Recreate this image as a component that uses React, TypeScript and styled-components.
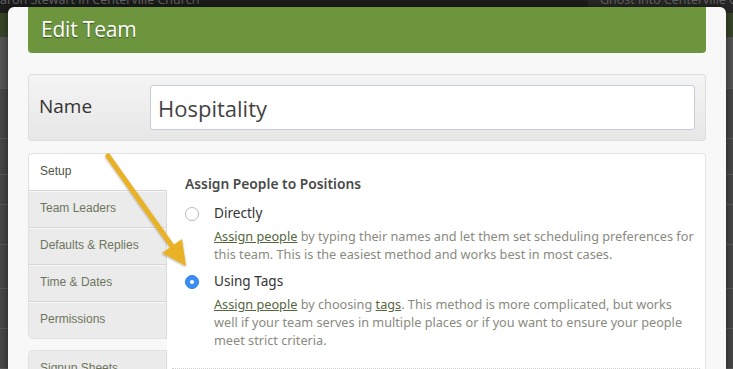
import React from "react";
import styled, { createGlobalStyle } from "styled-components";

const GlobalStyle = createGlobalStyle`
  html, body {
    margin: 0;
    padding: 0;
    width: 733px;
    height: 369px;
    overflow: hidden;
    background: #474747;
  }
  * { box-sizing: border-box; }
`;

const tabs = ["Setup", "Team Leaders", "Defaults & Replies", "Time & Dates", "Permissions"];

export default function App() {
  return (
    <Page>
      <GlobalStyle />
      <Backdrop>
        <TopBar>
          <TopTitle>aron Stewart in Centerville Church</TopTitle>
          <TopRight>
            <TopTitle>Ghost into Centerville Church</TopTitle>
          </TopRight>
        </TopBar>
        <OliveBand />
        <BackRows>
          {[52, 50, 36, 30, 40, 44, 40, 40].map((h, i) => (
            <BackRow key={i} $height={h} $light={i === 0} />
          ))}
        </BackRows>
      </Backdrop>

      <Modal>
        <Header>
          <HeaderTitle>Edit Team</HeaderTitle>
        </Header>

        <NamePanel>
          <NameLabel>Name</NameLabel>
          <NameInput value="Hospitality" readOnly />
        </NamePanel>

        <Body>
          <SideNav>
            <TabGroup>
              {tabs.map((t, i) => (
                <Tab key={t} $active={i === 0}>
                  {t}
                </Tab>
              ))}
            </TabGroup>
            <TabGroup>
              <Tab>Signup Sheets</Tab>
            </TabGroup>
          </SideNav>

          <Content>
            <SectionTitle>Assign People to Positions</SectionTitle>

            <Option>
              <Radio />
              <OptionText>
                <OptionLabel>Directly</OptionLabel>
                <OptionDesc>
                  <DescLink>Assign people</DescLink> by typing their names and let them set scheduling
                  preferences for this team. This is the easiest method and works best in most cases.
                </OptionDesc>
              </OptionText>
            </Option>

            <Option>
              <Radio $checked />
              <OptionText>
                <OptionLabel>Using Tags</OptionLabel>
                <OptionDesc>
                  <DescLink>Assign people</DescLink> by choosing <DescLink>tags</DescLink>. This method is
                  more complicated, but works well if your team serves in multiple places or if you want
                  to ensure your people meet strict criteria.
                </OptionDesc>
              </OptionText>
            </Option>

            <Divider />
          </Content>
        </Body>
      </Modal>

      <ArrowLayer width="733" height="369" viewBox="0 0 733 369">
        <defs>
          <filter id="arrowShadow" x="-20%" y="-20%" width="140%" height="140%">
            <feDropShadow dx="0" dy="1" stdDeviation="1.2" floodColor="#000" floodOpacity="0.35" />
          </filter>
        </defs>
        <g filter="url(#arrowShadow)">
          <line x1="108" y1="156" x2="174" y2="249" stroke="#e9b128" strokeWidth="5" strokeLinecap="round" />
          <polygon points="186,266 162,253 182,239" fill="#e9b128" />
        </g>
      </ArrowLayer>
    </Page>
  );
}

const Page = styled.div`
  position: relative;
  width: 733px;
  height: 369px;
  overflow: hidden;
`;

const Backdrop = styled.div`
  display: flex;
  flex-direction: column;
  width: 100%;
  height: 100%;
`;

const TopBar = styled.div`
  display: flex;
  height: 28px;
  background: #1d1d1d;
  overflow: hidden;
`;

const TopTitle = styled.div`
  margin-top: -9px;
  font-family: "Open Sans", "Liberation Sans", sans-serif;
  font-size: 12.5px;
  line-height: 18px;
  color: #666;
  white-space: nowrap;
`;

const TopRight = styled.div`
  margin-left: auto;
  width: 145px;
  padding-left: 12px;
  background: #282828;
`;

const OliveBand = styled.div`
  height: 52px;
  background: #394628;
`;

const BackRows = styled.div`
  display: flex;
  flex-direction: column;
`;

const BackRow = styled.div<{ $height: number; $light?: boolean }>`
  height: ${(p) => p.$height}px;
  background: ${(p) => (p.$light ? "#555" : "#474747")};
  border-bottom: 1px solid #5a5a5a;
`;

const Modal = styled.div`
  position: absolute;
  top: 7px;
  left: 8px;
  width: 718px;
  height: 400px;
  padding: 0 20px;
  background: #f8f8f8;
  border-radius: 6px 6px 0 0;
  box-shadow: 0 0 8px rgba(0, 0, 0, 0.5);
  display: flex;
  flex-direction: column;
`;

const Header = styled.div`
  height: 46px;
  display: flex;
  align-items: center;
  padding-left: 13px;
  background: #6c953e;
  border-radius: 0 0 4px 4px;
`;

const HeaderTitle = styled.h1`
  margin: 0 0 2px;
  font-family: "Open Sans", "Noto Sans", sans-serif;
  font-weight: 400;
  font-size: 21px;
  letter-spacing: -0.2px;
  color: #fff;
  text-shadow: 0 1px 1px rgba(0, 0, 0, 0.45);
`;

const NamePanel = styled.div`
  margin-top: 21px;
  height: 67px;
  display: flex;
  align-items: center;
  padding: 0 10px 0 10px;
  background: linear-gradient(#f4f4f4, #e7e7e7);
  border: 1px solid #dedede;
  border-radius: 3px;
`;

const NameLabel = styled.label`
  width: 111px;
  margin-bottom: 3px;
  font-family: "Open Sans", "Noto Sans", sans-serif;
  font-size: 19px;
  color: #333;
`;

const NameInput = styled.input`
  flex: 1;
  height: 45px;
  padding: 0 7px;
  font-family: "Open Sans", "Noto Sans", sans-serif;
  font-size: 22px;
  color: #444;
  background: #fff;
  border: 1px solid #c6cdd8;
  border-radius: 3px;
  outline: none;
`;

const Body = styled.div`
  margin-top: 12px;
  display: flex;
  flex: 1;
`;

const SideNav = styled.div`
  width: 139px;
  display: flex;
  flex-direction: column;
  gap: 11px;
`;

const TabGroup = styled.div`
  display: flex;
  flex-direction: column;
  background: #ebebeb;
  border: 1px solid #e1e1e1;
  border-right: none;
  border-radius: 5px 0 0 5px;
  overflow: hidden;
`;

const Tab = styled.div<{ $active?: boolean }>`
  height: 37px;
  flex: none;
  display: flex;
  align-items: center;
  padding: 0 0 3px 11px;
  font-family: "Liberation Sans", Arial, sans-serif;
  font-size: 12px;
  color: ${(p) => (p.$active ? "#4e5545" : "#6d765d")};
  background: ${(p) => (p.$active ? "#fff" : "#ebebeb")};
  border-right: 1px solid ${(p) => (p.$active ? "#fff" : "#dcdcdc")};
  &:first-child {
    height: 36px;
  }
  & + & {
    border-top: 1px solid #d6d6d6;
    box-shadow: inset 0 1px 0 #f7f7f7;
  }
`;

const Content = styled.div`
  flex: 1;
  padding: 20px 0 0 18px;
  background: #fff;
  border: 1px solid #e4e4e4;
  border-left: none;
  border-radius: 0 4px 0 0;
`;

const SectionTitle = styled.h2`
  margin: 0 0 11px;
  font-family: "Noto Sans", "Open Sans", sans-serif;
  font-weight: 600;
  font-size: 13.8px;
  color: #4a4a4a;
`;

const Option = styled.div`
  display: flex;
  gap: 15px;
  margin-bottom: 9px;
`;

const Radio = styled.span<{ $checked?: boolean }>`
  flex: none;
  width: 14px;
  height: 14px;
  margin-top: 3px;
  border-radius: 50%;
  background: ${(p) => (p.$checked ? "#3b8ef4" : "#fff")};
  border: 1px solid ${(p) => (p.$checked ? "#2f7fe6" : "#b9b9b9")};
  display: flex;
  align-items: center;
  justify-content: center;
  &::after {
    content: "";
    display: ${(p) => (p.$checked ? "block" : "none")};
    width: 4px;
    height: 4px;
    border-radius: 50%;
    background: #fff;
  }
`;

const OptionText = styled.div`
  display: flex;
  flex-direction: column;
  padding-right: 8px;
`;

const OptionLabel = styled.div`
  font-family: "Noto Sans", "Open Sans", sans-serif;
  font-size: 13.6px;
  line-height: 18px;
  color: #333;
`;

const OptionDesc = styled.p`
  margin: 5px 0 0;
  font-family: "Noto Sans", "Open Sans", sans-serif;
  font-size: 12.7px;
  line-height: 18px;
  color: #8a8a80;
`;

const DescLink = styled.a`
  color: #55653c;
  text-decoration: underline;
`;

const Divider = styled.div`
  margin: 19px 5px 0 -13px;
  border-top: 1px dotted #cfcfcf;
`;

const ArrowLayer = styled.svg`
  position: absolute;
  top: 0;
  left: 0;
  pointer-events: none;
`;
